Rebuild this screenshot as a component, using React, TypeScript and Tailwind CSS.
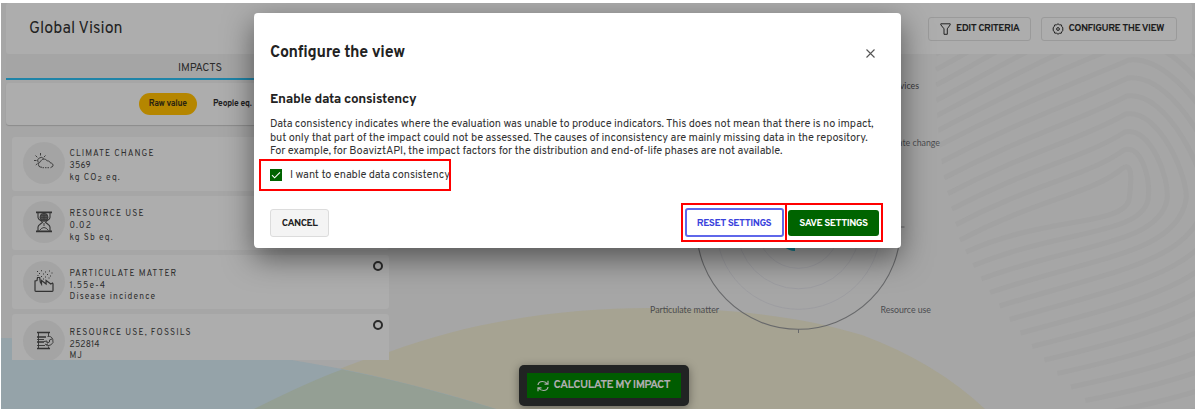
import type { ReactNode } from "react";

const arches = Array.from({ length: 17 }, (_, k) => {
  const ly = 240 - 15.5 * k;
  const lx = k < 6 ? 960 - 4 * k : 936;
  const rx = 966 + 7 * k + 0.35 * k * k;
  const ry = 252 + 13.5 * k;
  const top = 168 - 18 * k;
  return `M${lx} ${ly} C${lx + 80} ${ly - 42} ${1092 - 4 * k} ${top + 26} ${1123 + k} ${top} C${1132 + 9 * k} ${top - 6} ${1132 + 19 * k} 178 ${1129 + 19 * k} 200 C${1122 + 18 * k} ${226 + 9 * k} ${rx + 80 + 9 * k} ${ry - 36} ${rx} ${ry}`;
});

function Backdrop() {
  return (
    <svg className="absolute inset-0" width="1194" height="406" viewBox="1 3 1194 406" fill="none">
      <clipPath id="print">
        <path d="M935 54H1195V409H1085Q1000 330 972 275Q936 200 935 54Z" />
      </clipPath>
      <g clipPath="url(#print)" stroke="#a2a2a2" strokeWidth="5">
        {arches.map((d) => (
          <path key={d} d={d} />
        ))}
      </g>
      <path d="M254 409Q342 364 389 352C470 322 560 308 650 308C740 308 810 319 862 335Q935 362 985 409Z" fill="#a6a392" />
      <path d="M1 338C120 340 220 348 292 360C360 371 430 388 496 409H1Z" fill="#95a3a9" />
      <path d="M254 409Q310 381 342 369.500C400 381 450 395 496 409Z" fill="#949f94" />
    </svg>
  );
}

function RadarChart() {
  return (
    <svg className="absolute inset-0" width="1194" height="406" viewBox="1 3 1194 406" fill="none">
      <g stroke="#9b9ba0" strokeWidth="0.8">
        <circle cx="798.5" cy="227.300" r="20.500" />
        <circle cx="798.5" cy="227.300" r="41" />
        <circle cx="798.5" cy="227.300" r="61.500" />
        <circle cx="798.5" cy="227.300" r="82" />
      </g>
      <circle cx="798.5" cy="227.300" r="102" stroke="#68696b" strokeWidth="1.1" />
      <path d="M798.5 329v4M900.500 227h4" stroke="#68696b" />
      <path d="M783 244L795 244V251Q789 251 783 246Z" fill="#0f7f90" />
      <g className="font-[Lato,sans-serif] text-[8.8px]" fill="#4b4c50">
        <text x="919" y="89" textAnchor="end" fill="#39393b">Services</text>
        <text x="940" y="145.500" textAnchor="end">Climate change</text>
        <text x="650" y="313" textLength="69">Particulate matter</text>
        <text x="880.500" y="313" textLength="50.500">Resource use</text>
      </g>
    </svg>
  );
}

const iconProps = { fill: "none", stroke: "#333", strokeWidth: 0.9, width: 22, height: 24, viewBox: "0 0 22 24" };

const ClimateIcon = () => (
  <svg {...iconProps}>
    <path d="M7.500 2v2.500M2.500 4.500l1.800 1.800M12.500 4.500l-1.700 1.700M1 9.500h2.500M2.800 14l1.700-1.500" />
    <path d="M5.200 11.500A3.300 3.300 0 1 1 10.800 8" />
    <path d="M9 16.200H7.800a2.800 2.800 0 0 1-.3-5.500c1-3 5.200-3.600 6.800-.7 1.800-.3 2.800.8 3 1.900 3.600.2 3.500 4.300.7 4.300" />
    <path d="M9.500 16.700h8" strokeDasharray="1.500 1" />
  </svg>
);
const HourglassIcon = () => (
  <svg {...iconProps}>
    <path d="M3 2.300h16M3 21.300h16" strokeWidth="1.700" />
    <path d="M5 3v4.500c0 2 3.800 3.400 4.500 4.700-.7 1.300-4.500 2.600-4.500 4.700v4M17 3v4.500c0 2-3.800 3.400-4.500 4.700.7 1.300 4.500 2.600 4.500 4.700v4" strokeWidth="1.100" />
    <circle cx="11" cy="7.300" r="4" fill="#555" />
    <path d="M7.500 7.500h7M11 4v7M8 5.600h6M8 9.400h6" strokeWidth=".6" />
    <path d="M6.500 20.500q4.500-6 9 0M11 13v3" />
  </svg>
);
const FactoryIcon = () => (
  <svg {...iconProps}>
    <path d="M2 20.500V11l2-.5.5-3h2.200l.6 4.500 1.200 2 0-3.500 4.600 3.500 0-3.500 4.700 3.500 1.700-1 .5 1v6.500q0 .8-.8.800H2.800Q2 21.300 2 20.500Z" strokeWidth="1.200" />
    <path d="M4 1.500h1M8 .800h1M12 2h1M16 1h1M18.500 3h1M6 3.500h1M10 4h1M14 4.500h1M17 6h1M8 6.500h1M12 7h1M4.500 5.500h1M15.500 8h1M10 9h1" strokeWidth="1.100" />
  </svg>
);
const FossilIcon = () => (
  <svg {...iconProps}>
    <path d="M4 3.500h13M4 8h9M4 13h7M4 19.500h13" strokeWidth="1.700" />
    <path d="M5.500 3.500v16M15.500 4v3M15.500 17.500v2M4 10.500h7M4 16.500h8" />
    <path d="M14.500 7.500a4.600 4.600 0 1 1-2.500 7.500M11 12.500l3-.5v2l2.500-1v-2l2.500-1M13 16l2-1" />
  </svg>
);

type Impact = { title: string; value: string; unit: ReactNode; icon: ReactNode; dot: boolean; valueClass: string; textClass: string };

const impacts: Impact[] = [
  { title: "CLIMATE CHANGE", value: "3569", unit: <>kg CO<sub className="text-[7px] leading-none">2</sub> eq.</>, icon: <ClimateIcon />, dot: false, valueClass: "tracking-[0.3px]", textClass: "pt-[6px]" },
  { title: "RESOURCE USE", value: "0.02", unit: "kg Sb eq.", icon: <HourglassIcon />, dot: false, valueClass: "", textClass: "pt-[7px]" },
  { title: "PARTICULATE MATTER", value: "1.55e-4", unit: "Disease incidence", icon: <FactoryIcon />, dot: true, valueClass: "", textClass: "pt-[7px]" },
  { title: "RESOURCE USE, FOSSILS", value: "252814", unit: "MJ", icon: <FossilIcon />, dot: true, valueClass: "tracking-[0.2px]", textClass: "pt-[7px]" },
];

function ImpactCard({ item }: { item: Impact }) {
  return (
    <li className="flex h-[54px] shrink-0 items-start gap-[5px] rounded-[3px] bg-[#adadad] pt-[5.5px] pr-[6px] pl-[11px]">
      <div className="flex size-[42px] shrink-0 items-center justify-center rounded-full bg-[#a4a4a4]">{item.icon}</div>
      <div className={`flex flex-1 flex-col text-[8.5px] tracking-[1.1px] text-[#2f2f2f] ${item.textClass}`}>
        <span className="h-[12px] leading-[12px]">{item.title}</span>
        <span className={`h-[11.5px] leading-[12px] ${item.valueClass}`}>{item.value}</span>
        <span className="h-[12px] leading-[11px]">{item.unit}</span>
      </div>
      {item.dot && <span className="size-[10px] shrink-0 rounded-full border-2 border-[#2b2b2b]" />}
    </li>
  );
}

function HeaderButton({ icon, children, className }: { icon: ReactNode; children: ReactNode; className: string }) {
  return (
    <button className={`flex h-[24px] items-center rounded-[3px] border border-[#9a9a9a] text-[10px] font-bold tracking-[-0.5px] whitespace-nowrap text-[#1e1e1e] ${className}`}>
      {icon}
      <span className="pt-px leading-[12px]">{children}</span>
    </button>
  );
}

const FunnelIcon = () => (
  <svg width="11" height="12" viewBox="0 0 11 12" fill="none" stroke="#222" strokeWidth="1">
    <path d="M.8.800h9.400v1L7.300 5.800v5.500H4V5.800L.8 1.800Z" />
  </svg>
);
const GearIcon = () => (
  <svg width="12" height="12" viewBox="0 0 12 12" fill="none" stroke="#222" strokeWidth="1">
    <path d="M6 .8l1.500 1 1.900.1.500 1.800 1.200 1.300-.6 1 .6 1.300-1.300 1.200-.5 1.700-1.800.1L6 11.200l-1.500-1-1.800-.1-.5-1.700L.9 7.200 1.500 6 .9 4.900l1.300-1.200.5-1.800 1.800-.1Z" />
    <circle cx="6" cy="6" r="1.400" />
  </svg>
);

function Page() {
  return (
    <div className="relative flex h-full flex-col">
      <header className="ml-[5px] flex h-[51px] w-[1186px] shrink-0 items-center rounded-[3px] bg-[#adadad] pr-[15px] pl-[23px]">
        <h1 className="flex-1 pt-px text-[16px] leading-[20px] tracking-[0.05px] text-[#222]">Global Vision</h1>
        <HeaderButton icon={<FunnelIcon />} className="mr-[10px] w-[103px] gap-[5px] pl-[11px]">EDIT CRITERIA</HeaderButton>
        <HeaderButton icon={<GearIcon />} className="w-[136px] gap-[4.5px] pl-[10px]">CONFIGURE THE VIEW</HeaderButton>
      </header>
      <section className="ml-[5px] flex w-[388px] flex-col">
        <div className="flex h-[26px] items-center justify-center border-b-2 border-[#1f84a8] bg-[#a5a5a5] pt-[5px] text-[11px] tracking-[-0.1px] text-[#2b2b2b]">IMPACTS</div>
        <div className="mt-[3px] flex h-[42px] items-center rounded-[3px] bg-[#adadad] pl-[133px] text-[8.5px] font-bold tracking-[-0.25px] text-[#1f1f1f] shadow-[0_1px_1px_#8c8c8c]">
          <span className="flex h-[22px] w-[57.500px] items-center justify-center rounded-full bg-[#b58600] text-[#2b2410]">Raw value</span>
          <span className="ml-[16.500px]">People eq.</span>
        </div>
        <ul className="mt-[11.5px] ml-[5.500px] flex h-[223.500px] w-[377px] flex-col gap-[5.300px] overflow-hidden">
          {impacts.map((i) => (
            <ImpactCard key={i.title} item={i} />
          ))}
        </ul>
      </section>
    </div>
  );
}

function Dialog() {
  return (
    <div className="absolute top-[10px] left-[253px] flex h-[235px] w-[647px] flex-col rounded-[4px] bg-white px-[16px] text-[#333] shadow-[0_10px_30px_rgba(0,0,0,0.5)]">
      <div className="flex h-[78px] items-center justify-between pt-[2px] pr-[10px]">
        <h2 className="text-[16px] leading-[20px] font-bold tracking-[-0.25px] text-[#222]">Configure the view</h2>
        <svg width="9" height="9" viewBox="0 0 9 9" stroke="#555" strokeWidth="1.100">
          <path d="M.5.500l8 8M8.500.500l-8 8" />
        </svg>
      </div>
      <h3 className="h-[26px] text-[13.500px] leading-[17px] font-bold tracking-[-0.300px] text-[#222]">Enable data consistency</h3>
      <div className="relative top-px text-[11px] leading-[13.500px] tracking-[-0.100px] whitespace-nowrap">
        <p>Data consistency indicates where the evaluation was unable to produce indicators. This does not mean that there is no impact,</p>
        <p>but only that part of the impact could not be assessed. The causes of inconsistency are mainly missing data in the repository.</p>
        <p>For example, for BoaviztAPI, the impact factors for the distribution and end-of-life phases are not available.</p>
      </div>
      <label className="mt-[11.500px] flex h-[12px] items-center gap-[8px] text-[11px] tracking-[-0.110px] whitespace-nowrap">
        <span className="size-[12px] bg-[#006400]">
          <svg width="12" height="12" viewBox="0 0 12 12" fill="none" stroke="#fff" strokeWidth="1.100">
            <path d="M2 6.200l2.600 2.600L10 3.300" />
          </svg>
        </span>
        <span>I want to enable data consistency</span>
      </label>
      <div className="mt-[27px] flex items-center text-[10px] font-bold tracking-[-0.5px] whitespace-nowrap">
        <button className="h-[28px] w-[59px] rounded-[3px] border border-[#dcdcdc] bg-[#f4f4f4] pt-px text-[#222]">CANCEL</button>
        <button className="ml-auto h-[29px] w-[99px] rounded-[3px] border-2 border-[#5f67ea] pt-px text-[#3a42dc]">RESET SETTINGS</button>
        <button className="mr-[6px] ml-[4.500px] h-[26px] w-[91px] rounded-[3px] bg-[#006400] pt-px text-white">SAVE SETTINGS</button>
      </div>
    </div>
  );
}

export default function App() {
  return (
    <div className="h-[412px] w-[1195px] overflow-hidden bg-white pt-[3px] pl-px font-[Overpass,Roboto,sans-serif]">
      <main className="relative h-[406px] w-[1194px] overflow-hidden bg-[#a6a6a6]">
        <Backdrop />
        <Page />
        <RadarChart />
        <Dialog />
        <div className="absolute top-[362px] left-[518px] flex h-[41px] w-[170px] items-center justify-center rounded-[5px] bg-[#212323] shadow-[0_2px_10px_rgba(0,0,0,0.4)]">
          <button className="flex h-[25px] w-[154px] items-center gap-[4.500px] bg-[#005c00] pl-[10px] text-[11.500px] font-bold tracking-[-0.600px] whitespace-nowrap text-[#adadad]">
            <svg width="12" height="12" viewBox="0 0 12 12" fill="none" stroke="#adadad" strokeWidth="1.200">
              <path d="M1 5Q1.500 1.500 5.500 1.500 8.800 1.500 10.500 4M11 .8V4.200H7.500M11 7Q10.500 10.500 6.500 10.500 3.200 10.500 1.500 8M1 11.200V7.800H4.500" />
            </svg>
            <span>CALCULATE MY IMPACT</span>
          </button>
        </div>
        <div className="absolute top-[156px] left-[258px] h-[32px] w-[192px] border-2 border-[#ff0000]" />
        <div className="absolute top-[200px] left-[680px] h-[39px] w-[106px] border-2 border-[#ff0000]" />
        <div className="absolute top-[200px] left-[784px] h-[39px] w-[98px] border-2 border-[#ff0000]" />
      </main>
    </div>
  );
}
